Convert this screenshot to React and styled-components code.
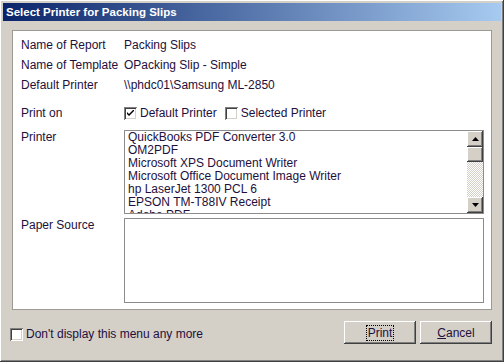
import React from 'react'
import styled, { createGlobalStyle } from 'styled-components'

const GlobalStyle = createGlobalStyle`
  html, body {
    margin: 0;
    padding: 0;
    background: #d4d0c8;
  }
  body {
    font-family: "Liberation Sans", Arial, sans-serif;
    font-size: 12px;
    color: #1e0f3c;
  }
`

const raised = `
  box-shadow: inset -1px -1px #404040, inset 1px 1px #ffffff,
    inset -2px -2px #808080, inset 2px 2px #d4d0c8;
`

const Window = styled.div`
  width: 504px;
  height: 362px;
  box-sizing: border-box;
  background: #d4d0c8;
  padding: 3px;
  display: flex;
  flex-direction: column;
  ${raised}
`

const TitleBar = styled.div`
  height: 18px;
  flex: none;
  display: flex;
  align-items: center;
  padding-left: 3px;
  background: linear-gradient(to right, #0a246a, #a6caf0);
  color: #ffffff;
  font-weight: bold;
  font-size: 11.5px;
`

const Body = styled.div`
  flex: 1;
  display: flex;
  flex-direction: column;
  padding: 9px 9px 0 9px;
`

const Panel = styled.div`
  background: #ffffff;
  border: 1px solid #9c9a94;
  padding: 4px 7px 6px 8px;
  display: grid;
  grid-template-columns: 103px 1fr;
  align-items: start;
`

const Label = styled.div`
  height: ${p => p.$h || 20}px;
  line-height: ${p => p.$h || 20}px;
  margin-top: ${p => p.$mt || 0}px;
  white-space: nowrap;
`

const Value = styled.div`
  height: ${p => p.$h || 20}px;
  line-height: ${p => p.$h || 20}px;
  margin-top: ${p => p.$mt || 0}px;
  display: flex;
  align-items: center;
  white-space: nowrap;
`

const TopLabel = styled.div`
  line-height: 13px;
  padding-top: 1px;
  margin-top: ${p => p.$mt || 0}px;
`

const CheckWrap = styled.label`
  display: flex;
  align-items: center;
  gap: 3px;
  margin-right: ${p => p.$mr || 0}px;
`

const Box = styled.span`
  width: 13px;
  height: 13px;
  box-sizing: border-box;
  background: #ffffff;
  display: inline-flex;
  align-items: center;
  justify-content: center;
  flex: none;
  box-shadow: inset 1px 1px #808080, inset -1px -1px #ffffff,
    inset 2px 2px #404040, inset -2px -2px #d4d0c8;
`

const List = styled.div`
  margin-top: ${p => p.$mt || 0}px;
  height: ${p => p.$h}px;
  box-sizing: border-box;
  border: 1px solid #8c8c8c;
  display: flex;
  overflow: hidden;
  background: #ffffff;
`

const Items = styled.div`
  flex: 1;
  padding-left: 3px;
  line-height: 13px;
  white-space: nowrap;
  overflow: hidden;
`

const ScrollBar = styled.div`
  width: 16px;
  flex: none;
  display: flex;
  flex-direction: column;
  background: repeating-conic-gradient(#d4d0c8 0 25%, #ffffff 0 50%) 0 0 / 2px 2px;
`

const ScrollBtn = styled.div`
  width: 16px;
  height: ${p => p.$h || 16}px;
  flex: none;
  background: #d4d0c8;
  display: flex;
  align-items: center;
  justify-content: center;
  ${raised}
`

const Track = styled.div`
  flex: 1;
`

const Footer = styled.div`
  flex: 1;
  display: flex;
  align-items: center;
  justify-content: space-between;
  padding: 0 0 4px 0;
`

const FooterCheck = styled(CheckWrap)`
  margin-left: -2px;
  margin-top: 3px;
`

const Buttons = styled.div`
  display: flex;
  gap: 4px;
`

const Button = styled.button`
  width: 72px;
  height: 23px;
  border: none;
  background: #d4d0c8;
  font-family: inherit;
  font-size: 12px;
  color: #1e0f3c;
  padding: 0;
  ${raised}
`

const Focus = styled.span`
  outline: 1px dotted #000000;
  padding: 0 1px;
`

function Check({ checked }) {
  return (
    <Box>
      {checked && (
        <svg width="7" height="7" viewBox="0 0 7 7">
          <path d="M0 2 L0 4 L2 6 L7 1 L7 -1 L2 4 Z" fill="#000" />
        </svg>
      )}
    </Box>
  )
}

function Arrow({ down }) {
  return (
    <svg width="7" height="4" viewBox="0 0 7 4">
      <path d={down ? 'M0 0 H7 L3.5 4 Z' : 'M3.5 0 L7 4 H0 Z'} fill="#000" />
    </svg>
  )
}

const printers = [
  'QuickBooks PDF Converter 3.0',
  'OM2PDF',
  'Microsoft XPS Document Writer',
  'Microsoft Office Document Image Writer',
  'hp LaserJet 1300 PCL 6',
  'EPSON TM-T88IV Receipt',
  'Adobe PDF'
]

function App() {
  return (
    <>
      <GlobalStyle />
      <Window>
        <TitleBar>Select Printer for Packing Slips</TitleBar>
        <Body>
          <Panel>
            <Label>Name of Report</Label>
            <Value>Packing Slips</Value>
            <Label>Name of Template</Label>
            <Value>OPacking Slip - Simple</Value>
            <Label>Default Printer</Label>
            <Value>\\phdc01\Samsung ML-2850</Value>

            <Label $mt={8}>Print on</Label>
            <Value $mt={8}>
              <CheckWrap $mr={8}>
                <Check checked />
                Default Printer
              </CheckWrap>
              <CheckWrap>
                <Check />
                Selected Printer
              </CheckWrap>
            </Value>

            <TopLabel $mt={7}>Printer</TopLabel>
            <List $mt={7} $h={84}>
              <Items>
                {printers.map(p => (
                  <div key={p}>{p}</div>
                ))}
              </Items>
              <ScrollBar>
                <ScrollBtn>
                  <Arrow />
                </ScrollBtn>
                <ScrollBtn $h={15} />
                <Track />
                <ScrollBtn>
                  <Arrow down />
                </ScrollBtn>
              </ScrollBar>
            </List>

            <TopLabel $mt={4}>Paper Source</TopLabel>
            <List $mt={4} $h={85} />
          </Panel>
          <Footer>
            <FooterCheck>
              <Check />
              Don't display this menu any more
            </FooterCheck>
            <Buttons>
              <Button>
                <Focus>Print</Focus>
              </Button>
              <Button>
                <u>C</u>ancel
              </Button>
            </Buttons>
          </Footer>
        </Body>
      </Window>
    </>
  )
}

export default App
